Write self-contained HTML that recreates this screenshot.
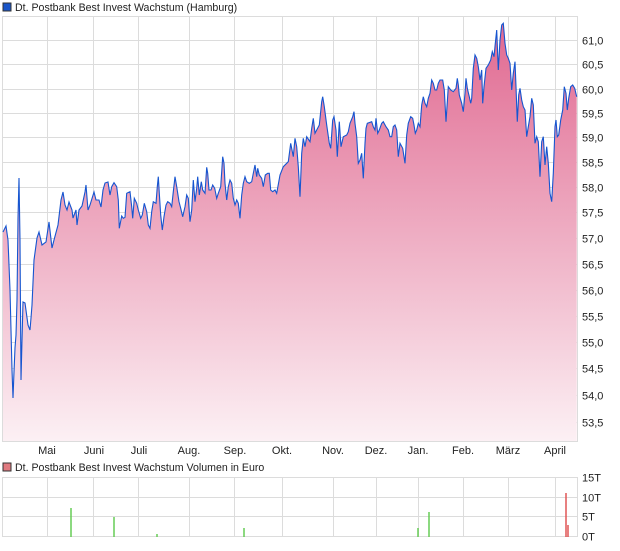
<!DOCTYPE html>
<html><head><meta charset="utf-8"><style>
body{margin:0;background:#fff;width:620px;height:546px;overflow:hidden}
svg text{font-family:"Liberation Sans",sans-serif;font-size:11px;fill:#222}
svg text.t{font-size:10.6px}
</style></head><body>
<svg id="s" width="620" height="546" xmlns="http://www.w3.org/2000/svg">
<defs><linearGradient id="g" gradientUnits="userSpaceOnUse" x1="0" y1="20" x2="0" y2="441">
<stop offset="0" stop-color="#e06890"/><stop offset="1" stop-color="#fcf0f4"/></linearGradient></defs>
<rect x="3" y="3" width="8" height="8" fill="#1a55c8" stroke="#333" stroke-width="1"/>
<text class="t" x="15" y="11">Dt. Postbank Best Invest Wachstum (Hamburg)</text>
<g id="grid" stroke="#dcdcdc" stroke-width="1" fill="none"></g>
<path id="area" fill="url(#g)"/>
<path id="line" fill="none" stroke="#1655d0" stroke-width="1.1"/>
<g id="labels"></g>
<rect x="3" y="463" width="8" height="8" fill="#e07a80" stroke="#333" stroke-width="1"/>
<text class="t" x="15" y="471">Dt. Postbank Best Invest Wachstum Volumen in Euro</text>
<g stroke-width="1.5">
<line x1="71" y1="508" x2="71" y2="537" stroke="#66cc55"/>
<line x1="114" y1="517" x2="114" y2="537" stroke="#66cc55"/>
<line x1="157" y1="534" x2="157" y2="537" stroke="#66cc55"/>
<line x1="244" y1="528" x2="244" y2="537" stroke="#66cc55"/>
<line x1="418" y1="528" x2="418" y2="537" stroke="#66cc55"/>
<line x1="429" y1="512" x2="429" y2="537" stroke="#66cc55"/>
<line x1="566" y1="493" x2="566" y2="537" stroke="#e05555"/>
<line x1="568" y1="525" x2="568" y2="537" stroke="#e05555"/>
</g>
</svg>
<script>
var NS="http://www.w3.org/2000/svg";
var grid=document.getElementById('grid'),lab=document.getElementById('labels');
function L(x1,y1,x2,y2){var l=document.createElementNS(NS,'line');l.setAttribute('x1',x1);l.setAttribute('y1',y1);l.setAttribute('x2',x2);l.setAttribute('y2',y2);grid.appendChild(l);}
function T(x,y,t,a){var e=document.createElementNS(NS,'text');e.setAttribute('x',x);e.setAttribute('y',y);if(a)e.setAttribute('text-anchor',a);e.textContent=t;lab.appendChild(e);}
var vx=[2.5,47.5,93.5,138.5,189.5,234.5,282.5,333.5,376.5,418.5,463.5,508.5,555.5];
var hy=[[16.5,null],[40.5,'61,0'],[64.5,'60,5'],[89.5,'60,0'],[113.5,'59,5'],[137.5,'59,0'],[162.5,'58,5'],[187.5,'58,0'],[212.5,'57,5'],[238.5,'57,0'],[264.5,'56,5'],[290.5,'56,0'],[316.5,'55,5'],[342.5,'55,0'],[368.5,'54,5'],[395.5,'54,0'],[422.5,'53,5']];
vx.forEach(function(x){L(x,16,x,441);L(x,477,x,537);});
hy.forEach(function(h){L(2,h[0],578,h[0]);if(h[1])T(582,h[0]+4,h[1]);});
L(2,441.5,578,441.5);L(577.5,16,577.5,441);
[[477.5,'15T'],[497.5,'10T'],[516.5,'5T'],[536.5,'0T']].forEach(function(h){L(2,h[0],578,h[0]);T(582,h[0]+4,h[1]);});
L(577.5,477,577.5,537);
var mons=[['Mai',47],['Juni',94],['Juli',139],['Aug.',189],['Sep.',235],['Okt.',282],['Nov.',333],['Dez.',376],['Jan.',418],['Feb.',463],['März',508],['April',555]];
mons.forEach(function(m){T(m[1],454,m[0],'middle');});
var p=[[3,232],[5,228],[6,226],[8,240],[10,290],[11,330],[12,370],[13,398],[14,372],[15,348],[16,335],[17,300],[18,218],[19,178],[20,240],[21,380],[22,340],[23,302],[25,303],[28,325],[30,330],[31,318],[32,305],[34,260],[37,238],[39,232],[42,245],[46,242],[49,222],[52,248],[54,240],[58,225],[61,200],[63,192],[65,205],[67,210],[69,202],[72,210],[73,218],[76,210],[77,225],[79,210],[82,206],[85,192],[86,185],[88,210],[90,205],[94,192],[96,200],[99,200],[101,207],[103,190],[105,183],[108,182],[110,195]];
var z5=[[0,165],[5,140],[12,128],[20,140],[25,180],[28,265],[35,228],[40,235],[45,232],[50,160],[60,155],[65,200],[68,235],[73,175],[80,190],[85,210],[92,235],[97,225],[103,190],[110,215],[115,255],[120,265],[125,215],[130,185],[138,190],[142,140],[145,110],[148,160],[152,225],[157,270],[162,230],[168,195],[173,185],[180,190],[185,200],[190,155],[195,110],[200,140],[207,185],[212,205],[218,230],[225,200],[230,165],[235,175],[240,245],[245,210],[250,120],[255,185],[260,145],[263,110],[268,165],[274,125],[278,150],[285,160],[290,82],[293,100],[297,150],[303,150],[308,135],[314,145],[320,175],[325,160],[332,140],[338,50],[342,70],[345,130],[350,180],[355,140],[360,120],[365,130],[370,175],[375,195],[380,180],[385,190],[390,235],[395,165],[400,130],[405,110],[410,125],[418,130],[425,125],[430,100],[435,75],[440,110],[443,85],[448,105],[455,115],[460,140],[466,105],[473,100],[478,100],[482,150],[488,155],[495,150],[500,160]];
z5.forEach(function(q){p.push([110+q[0]/3,140+q[1]/3]);});
var z4=[[0,495],[10,470],[25,455],[32,400],[40,440],[45,385],[50,410],[55,470],[60,560],[65,430],[70,385],[75,410],[80,380],[90,395],[95,355],[100,325],[105,370],[110,360],[118,345],[125,275],[128,260],[133,290],[140,345],[148,400],[152,415],[158,330],[162,320],[168,360],[172,440],[178,335],[183,410],[190,380],[200,375],[205,365],[210,340],[218,320],[222,305],[225,340],[230,380],[235,460],[240,450],[245,430],[250,505],[255,400],[258,355],[262,340],[275,335],[280,350],[285,360],[288,325],[293,370],[298,360],[305,340],[310,335],[318,350],[325,360],[330,380],[335,380],[340,350],[345,345],[350,360],[355,440],[360,400],[368,415],[375,460],[380,375],[385,340],[392,320],[398,325],[402,345],[406,370],[410,360],[415,340],[420,350],[425,285],[430,260],[435,280],[440,290],[445,265],[450,250],[455,210],[460,220],[465,240],[470,240],[475,220],[480,210],[488,210],[493,240],[498,335],[505,230],[512,240],[520,245],[528,235],[532,205],[535,225],[538,255],[545,280],[550,305],[555,250],[558,205],[562,235],[568,260],[572,280],[575,265],[580,175],[585,135],[590,145],[595,170],[600,210],[605,180],[608,280],[612,230],[618,175],[625,165],[632,150],[637,125],[642,140],[646,100],[650,60],[655,180],[660,90],[665,45],[670,40],[675,100],[680,135],[685,145],[690,160],[695,240],[700,190],[705,155],[708,230],[712,335],[716,255],[720,235],[725,270],[730,290],[735,300],[740,380],[745,350],[750,320],[755,265],[760,285],[765,400],[770,380],[775,395],[780,500],[785,395],[790,380],[795,465],[800,410],[805,460],[810,550],[815,575],[820,490],[825,350],[828,330],[832,380],[836,375],[842,330],[848,300],[853,230],[858,250],[862,300],[866,265],[872,230],[878,225],[884,235],[890,260]];
z4.forEach(function(q){var x=280+q[0]/3;if(x>p[p.length-1][0])p.push([x,10+q[1]/3]);});
var d='M'+p.map(function(q){return q[0].toFixed(1)+','+q[1].toFixed(1)}).join('L');
document.getElementById('line').setAttribute('d',d);
document.getElementById('area').setAttribute('d',d+'L'+p[p.length-1][0].toFixed(1)+',441L3,441Z');
</script>
</body></html>
